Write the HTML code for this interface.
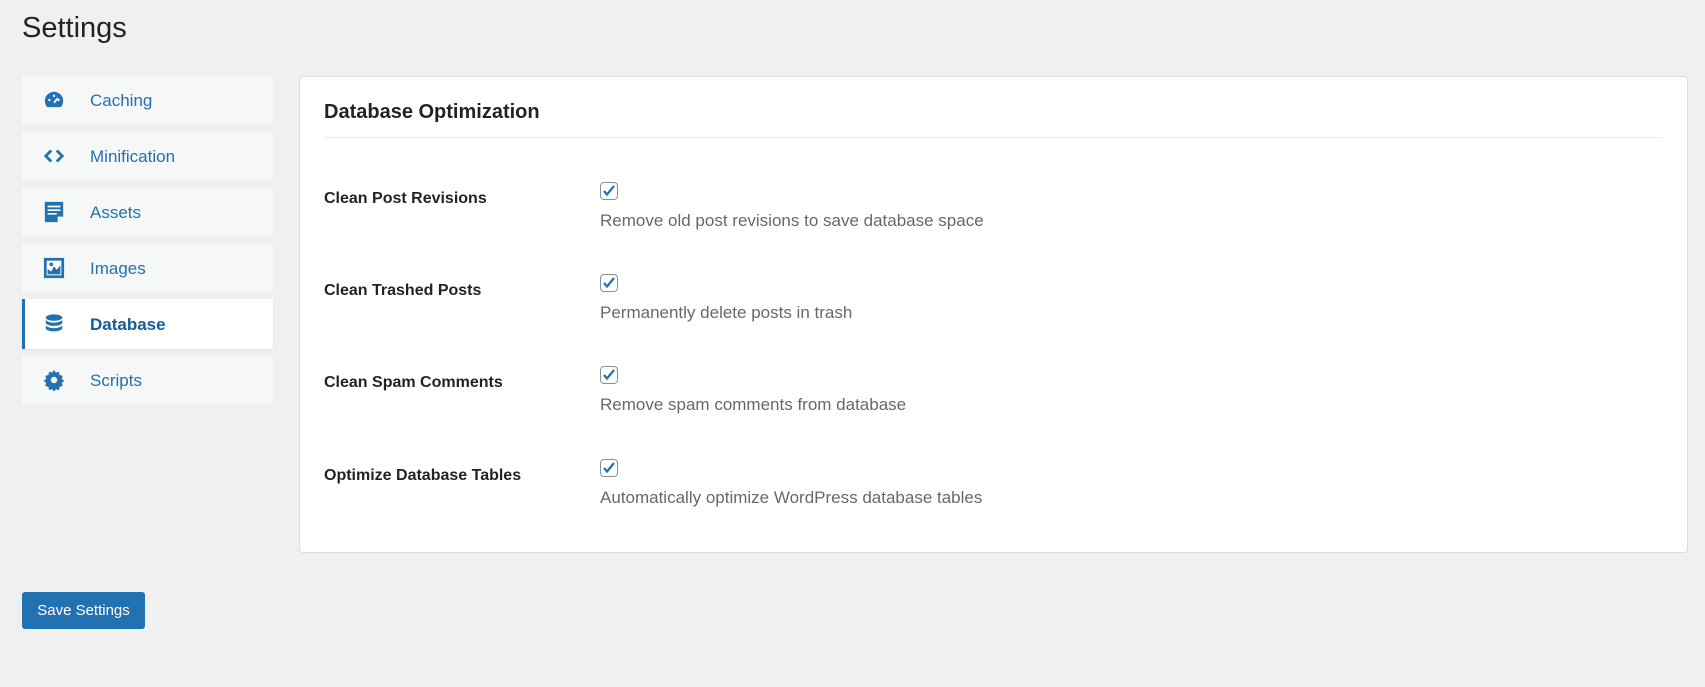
<!DOCTYPE html>
<html><head><meta charset="utf-8"><style>
body{margin:0;width:1705px;height:687px;background:#f0f0f1;font-family:"Liberation Sans",sans-serif;color:#1d2327;position:relative;overflow:hidden}
h1{position:absolute;left:22px;top:12px;margin:0;font-size:29px;font-weight:400;}
.nav{position:absolute;left:22px;top:75px;width:251px}
.item{height:50px;background:#f6f7f7;margin-bottom:6px;position:relative;color:#2271b1;font-size:17px;box-sizing:border-box}
.item.active{background:#fff;border-left:3px solid #2271b1;font-weight:700;color:#135e96;box-shadow:0 1px 2px rgba(0,0,0,.08)}
.item svg{position:absolute;left:21px;top:14px;width:22px;height:22px}
.item.active svg{left:18px}
.item span{position:absolute;left:68px;top:16px}
.item.active span{left:65px}
.panel{position:absolute;left:299px;top:76px;width:1389px;height:477px;background:#fff;border:1px solid #dcdcde;border-radius:4px;box-sizing:border-box}
.panel h2{position:absolute;left:24px;top:24px;margin:0;font-size:20px;font-weight:700}
.hr{position:absolute;left:24px;right:24px;top:60px;border-top:1px solid #ececec}
.row{position:absolute;left:24px;width:1000px}
.row b{position:absolute;left:0;top:0;font-size:16px}
.cb{position:absolute;left:276px;top:-8px;width:18px;height:18px;border:1px solid #8c8f94;border-radius:4px;box-sizing:border-box}
.cb svg{position:absolute;left:1px;top:1px}
.row p{position:absolute;left:276px;top:21px;margin:0;font-size:17px;color:#646970;white-space:nowrap}
.btn{position:absolute;left:22px;top:592px;width:123px;height:37px;background:#2271b1;border-radius:3px;color:#fff;font-size:15px;text-align:center;line-height:37px}
</style></head><body>
<h1>Settings</h1>
<div class="nav">
<div class="item"><svg viewBox="0 0 24 24"><path d="M12 3a10 10 0 0 0-10 10c0 2.6 1 5 2.6 6.8h14.8A10 10 0 0 0 22 13 10 10 0 0 0 12 3z" fill="#2271b1"/><circle cx="7" cy="12" r="1.3" fill="#fff"/><circle cx="12" cy="7.5" r="1.3" fill="#fff"/><circle cx="17" cy="12" r="1.3" fill="#fff"/><path d="M12 15l4-5" stroke="#fff" stroke-width="2"/></svg><span>Caching</span></div>
<div class="item"><svg viewBox="0 0 24 24"><path d="M9 6l-6 6 6 6M15 6l6 6-6 6" stroke="#2271b1" stroke-width="3" fill="none"/></svg><span>Minification</span></div>
<div class="item"><svg viewBox="0 0 24 24"><path d="M2 1h20v16l-6 6H2z" fill="#2271b1"/><path d="M5 6h14M5 10h14M5 14h10" stroke="#fff" stroke-width="1.8"/><path d="M16 23v-6h6" fill="#fff"/></svg><span>Assets</span></div>
<div class="item"><svg viewBox="0 0 24 24"><rect x="1" y="1" width="22" height="22" fill="#2271b1"/><rect x="4" y="4" width="16" height="16" fill="#fff"/><path d="M5 19v-6l4 3 3-6 3 4 4-5v10z" fill="#2271b1"/><circle cx="9" cy="8" r="2" fill="#2271b1"/></svg><span>Images</span></div>
<div class="item active"><svg viewBox="0 0 24 24"><ellipse cx="12" cy="5" rx="9" ry="3.5" fill="#2271b1"/><path d="M3 7.5v3c0 2 4 3.5 9 3.5s9-1.5 9-3.5v-3c-1.5 2-5 3-9 3s-7.5-1-9-3zM3 13.5v3c0 2 4 3.5 9 3.5s9-1.5 9-3.5v-3c-1.5 2-5 3-9 3s-7.5-1-9-3z" fill="#2271b1"/></svg><span>Database</span></div>
<div class="item"><svg viewBox="0 0 24 24"><path d="M12 1l2 3 3.5-1 .5 3.5 3.5 1-1 3.5 3 2-3 2 1 3.5-3.5 1-.5 3.5-3.5-1-2 3-2-3-3.5 1-.5-3.5-3.5-1 1-3.5-3-2 3-2-1-3.5 3.5-1L6.5 3l3.5 1z" fill="#2271b1"/><circle cx="12" cy="12" r="3.5" fill="#f6f7f7"/></svg><span>Scripts</span></div>
</div>
<div class="panel">
<h2>Database Optimization</h2>
<div class="hr"></div>
<div class="row" style="top:113px"><b>Clean Post Revisions</b><div class="cb"><svg width="14" height="14" viewBox="0 0 14 14"><path d="M2 7l3 3.5L12 2" stroke="#2271b1" stroke-width="2.2" fill="none"/></svg></div><p>Remove old post revisions to save database space</p></div>
<div class="row" style="top:205px"><b>Clean Trashed Posts</b><div class="cb"><svg width="14" height="14" viewBox="0 0 14 14"><path d="M2 7l3 3.5L12 2" stroke="#2271b1" stroke-width="2.2" fill="none"/></svg></div><p>Permanently delete posts in trash</p></div>
<div class="row" style="top:297px"><b>Clean Spam Comments</b><div class="cb"><svg width="14" height="14" viewBox="0 0 14 14"><path d="M2 7l3 3.5L12 2" stroke="#2271b1" stroke-width="2.2" fill="none"/></svg></div><p>Remove spam comments from database</p></div>
<div class="row" style="top:390px"><b>Optimize Database Tables</b><div class="cb"><svg width="14" height="14" viewBox="0 0 14 14"><path d="M2 7l3 3.5L12 2" stroke="#2271b1" stroke-width="2.2" fill="none"/></svg></div><p>Automatically optimize WordPress database tables</p></div>
</div>
<div class="btn">Save Settings</div>
</body></html>
